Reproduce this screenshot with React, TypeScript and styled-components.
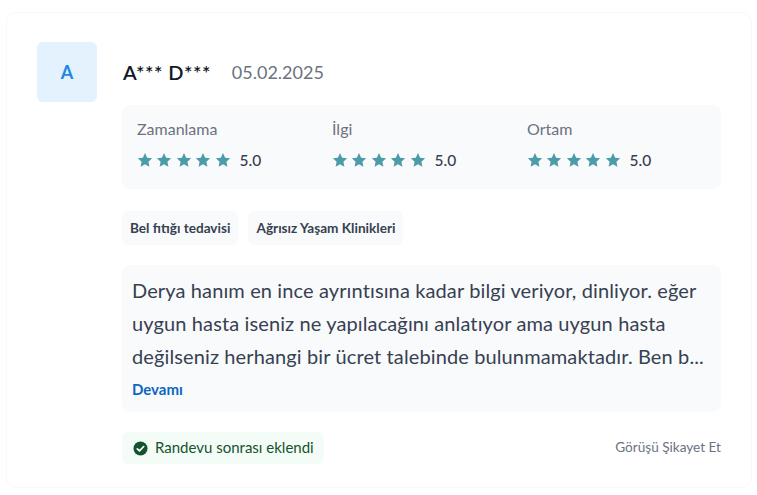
import React from "react";
import styled, { createGlobalStyle } from "styled-components";

const GlobalStyle = createGlobalStyle`
	html, body {
		margin: 0;
		padding: 0;
		background: #ffffff;
	}
	body {
		font-family: "Lato", "Noto Sans", sans-serif;
	}
`;

const scores = [
	{ label: "Zamanlama", value: "5.0" },
	{ label: "İlgi", value: "5.0" },
	{ label: "Ortam", value: "5.0" },
];

const tags = ["Bel fıtığı tedavisi", "Ağrısız Yaşam Klinikleri"];

const Star: React.FC = () => (
	<StarIcon viewBox="0 0 24 24">
		<path d="M12 1.6l3.2 6.9 7.5.9-5.6 5.1 1.5 7.5L12 18.3l-6.6 3.7 1.5-7.5-5.6-5.1 7.5-.9z" />
	</StarIcon>
);

const App: React.FC = () => {
	return (
		<Page>
			<GlobalStyle />
			<Card>
				<Avatar>A</Avatar>
				<Content>
					<Header>
						<Name>A*** D***</Name>
						<DateText>05.02.2025</DateText>
					</Header>
					<Scores>
						{scores.map((score) => (
							<Score key={score.label}>
								<ScoreLabel>{score.label}</ScoreLabel>
								<ScoreRow>
									<Stars>
										{[0, 1, 2, 3, 4].map((i) => (
											<Star key={i} />
										))}
									</Stars>
									<ScoreValue>{score.value}</ScoreValue>
								</ScoreRow>
							</Score>
						))}
					</Scores>
					<Tags>
						{tags.map((tag) => (
							<Tag key={tag}>{tag}</Tag>
						))}
					</Tags>
					<Comment>
						<CommentText>
							Derya hanım en ince ayrıntısına kadar bilgi veriyor, dinliyor. eğer
							uygun hasta iseniz ne yapılacağını anlatıyor ama uygun hasta
							değilseniz herhangi bir ücret talebinde bulunmamaktadır. Ben b...
						</CommentText>
						<MoreLink>Devamı</MoreLink>
					</Comment>
					<Footer>
						<Verified>
							<CheckIcon viewBox="0 0 16 16">
								<circle cx="8" cy="8" r="7.5" fill="#14532d" />
								<path
									d="M4.6 8.3l2.3 2.3 4.5-4.7"
									fill="none"
									stroke="#ffffff"
									strokeWidth="1.8"
									strokeLinecap="round"
									strokeLinejoin="round"
								/>
							</CheckIcon>
							<VerifiedText>Randevu sonrası eklendi</VerifiedText>
						</Verified>
						<Report>Görüşü Şikayet Et</Report>
					</Footer>
				</Content>
			</Card>
		</Page>
	);
};

export default App;

const Page = styled.div`
	width: 757px;
	height: 495px;
	box-sizing: border-box;
	padding: 12px 5px 0 6px;
	overflow: hidden;
`;

const Card = styled.div`
	box-sizing: border-box;
	height: 476px;
	padding: 29px 30px 0 30px;
	display: flex;
	gap: 25px;
	background: #ffffff;
	border: 1px solid #f8f8f9;
	border-radius: 10px;
`;

const Avatar = styled.div`
	flex: none;
	width: 60px;
	height: 60px;
	display: flex;
	align-items: center;
	justify-content: center;
	background: #e3f2fd;
	border-radius: 6px;
	color: #1e88e5;
	font-size: 18px;
	font-weight: 700;
`;

const Content = styled.div`
	flex: 1;
	min-width: 0;
`;

const Header = styled.div`
	height: 63px;
	box-sizing: border-box;
	display: flex;
	align-items: center;
	gap: 21px;
	padding: 0 0 3px 1px;
`;

const Name = styled.div`
	color: #111827;
	font-size: 20px;
	font-weight: 600;
	letter-spacing: 0.45px;
`;

const DateText = styled.div`
	color: #6b7280;
	font-size: 18px;
`;

const Scores = styled.div`
	height: 84px;
	box-sizing: border-box;
	padding: 14px 15px 0;
	display: grid;
	grid-template-columns: repeat(3, 195px);
	background: #f9fafb;
	border-radius: 8px;
`;

const Score = styled.div`
	display: flex;
	flex-direction: column;
	gap: 10px;
`;

const ScoreLabel = styled.div`
	color: #6b7280;
	font-size: 16px;
	line-height: 20px;
`;

const ScoreRow = styled.div`
	display: flex;
	align-items: center;
	gap: 9px;
	height: 21px;
`;

const Stars = styled.div`
	display: flex;
	gap: 3.4px;
`;

const StarIcon = styled.svg`
	width: 16px;
	height: 16px;
	fill: #4b9ca8;
`;

const ScoreValue = styled.div`
	color: #374151;
	font-size: 15.5px;
	font-weight: 500;
`;

const Tags = styled.div`
	display: flex;
	gap: 10px;
	margin-top: 22px;
`;

const Tag = styled.div`
	height: 34px;
	padding: 0 8px;
	display: flex;
	align-items: center;
	background: #f9fafb;
	border-radius: 6px;
	color: #374151;
	font-size: 13.6px;
	font-weight: 700;
`;

const Comment = styled.div`
	height: 147px;
	box-sizing: border-box;
	margin-top: 20px;
	padding: 9px 10px 0;
	background: #f9fafb;
	border-radius: 8px;
`;

const CommentText = styled.div`
	color: #374151;
	font-size: 20px;
	letter-spacing: 0.12px;
	line-height: 33px;
`;

const MoreLink = styled.div`
	margin-top: 6px;
	color: #0b66c3;
	font-size: 15px;
	font-weight: 700;
	line-height: 20px;
`;

const Footer = styled.div`
	display: flex;
	align-items: center;
	justify-content: space-between;
	margin-top: 20px;
`;

const Verified = styled.div`
	height: 32px;
	padding: 0 10px 0 11px;
	display: flex;
	align-items: center;
	gap: 7px;
	background: #f3fcf6;
	border-radius: 6px;
	color: #14532d;
	font-size: 15px;
`;

const VerifiedText = styled.span`
	margin-top: -2px;
`;

const CheckIcon = styled.svg`
	width: 15px;
	height: 15px;
`;

const Report = styled.div`
	margin-top: -2px;
	color: #6b7280;
	font-size: 13.6px;
`;
